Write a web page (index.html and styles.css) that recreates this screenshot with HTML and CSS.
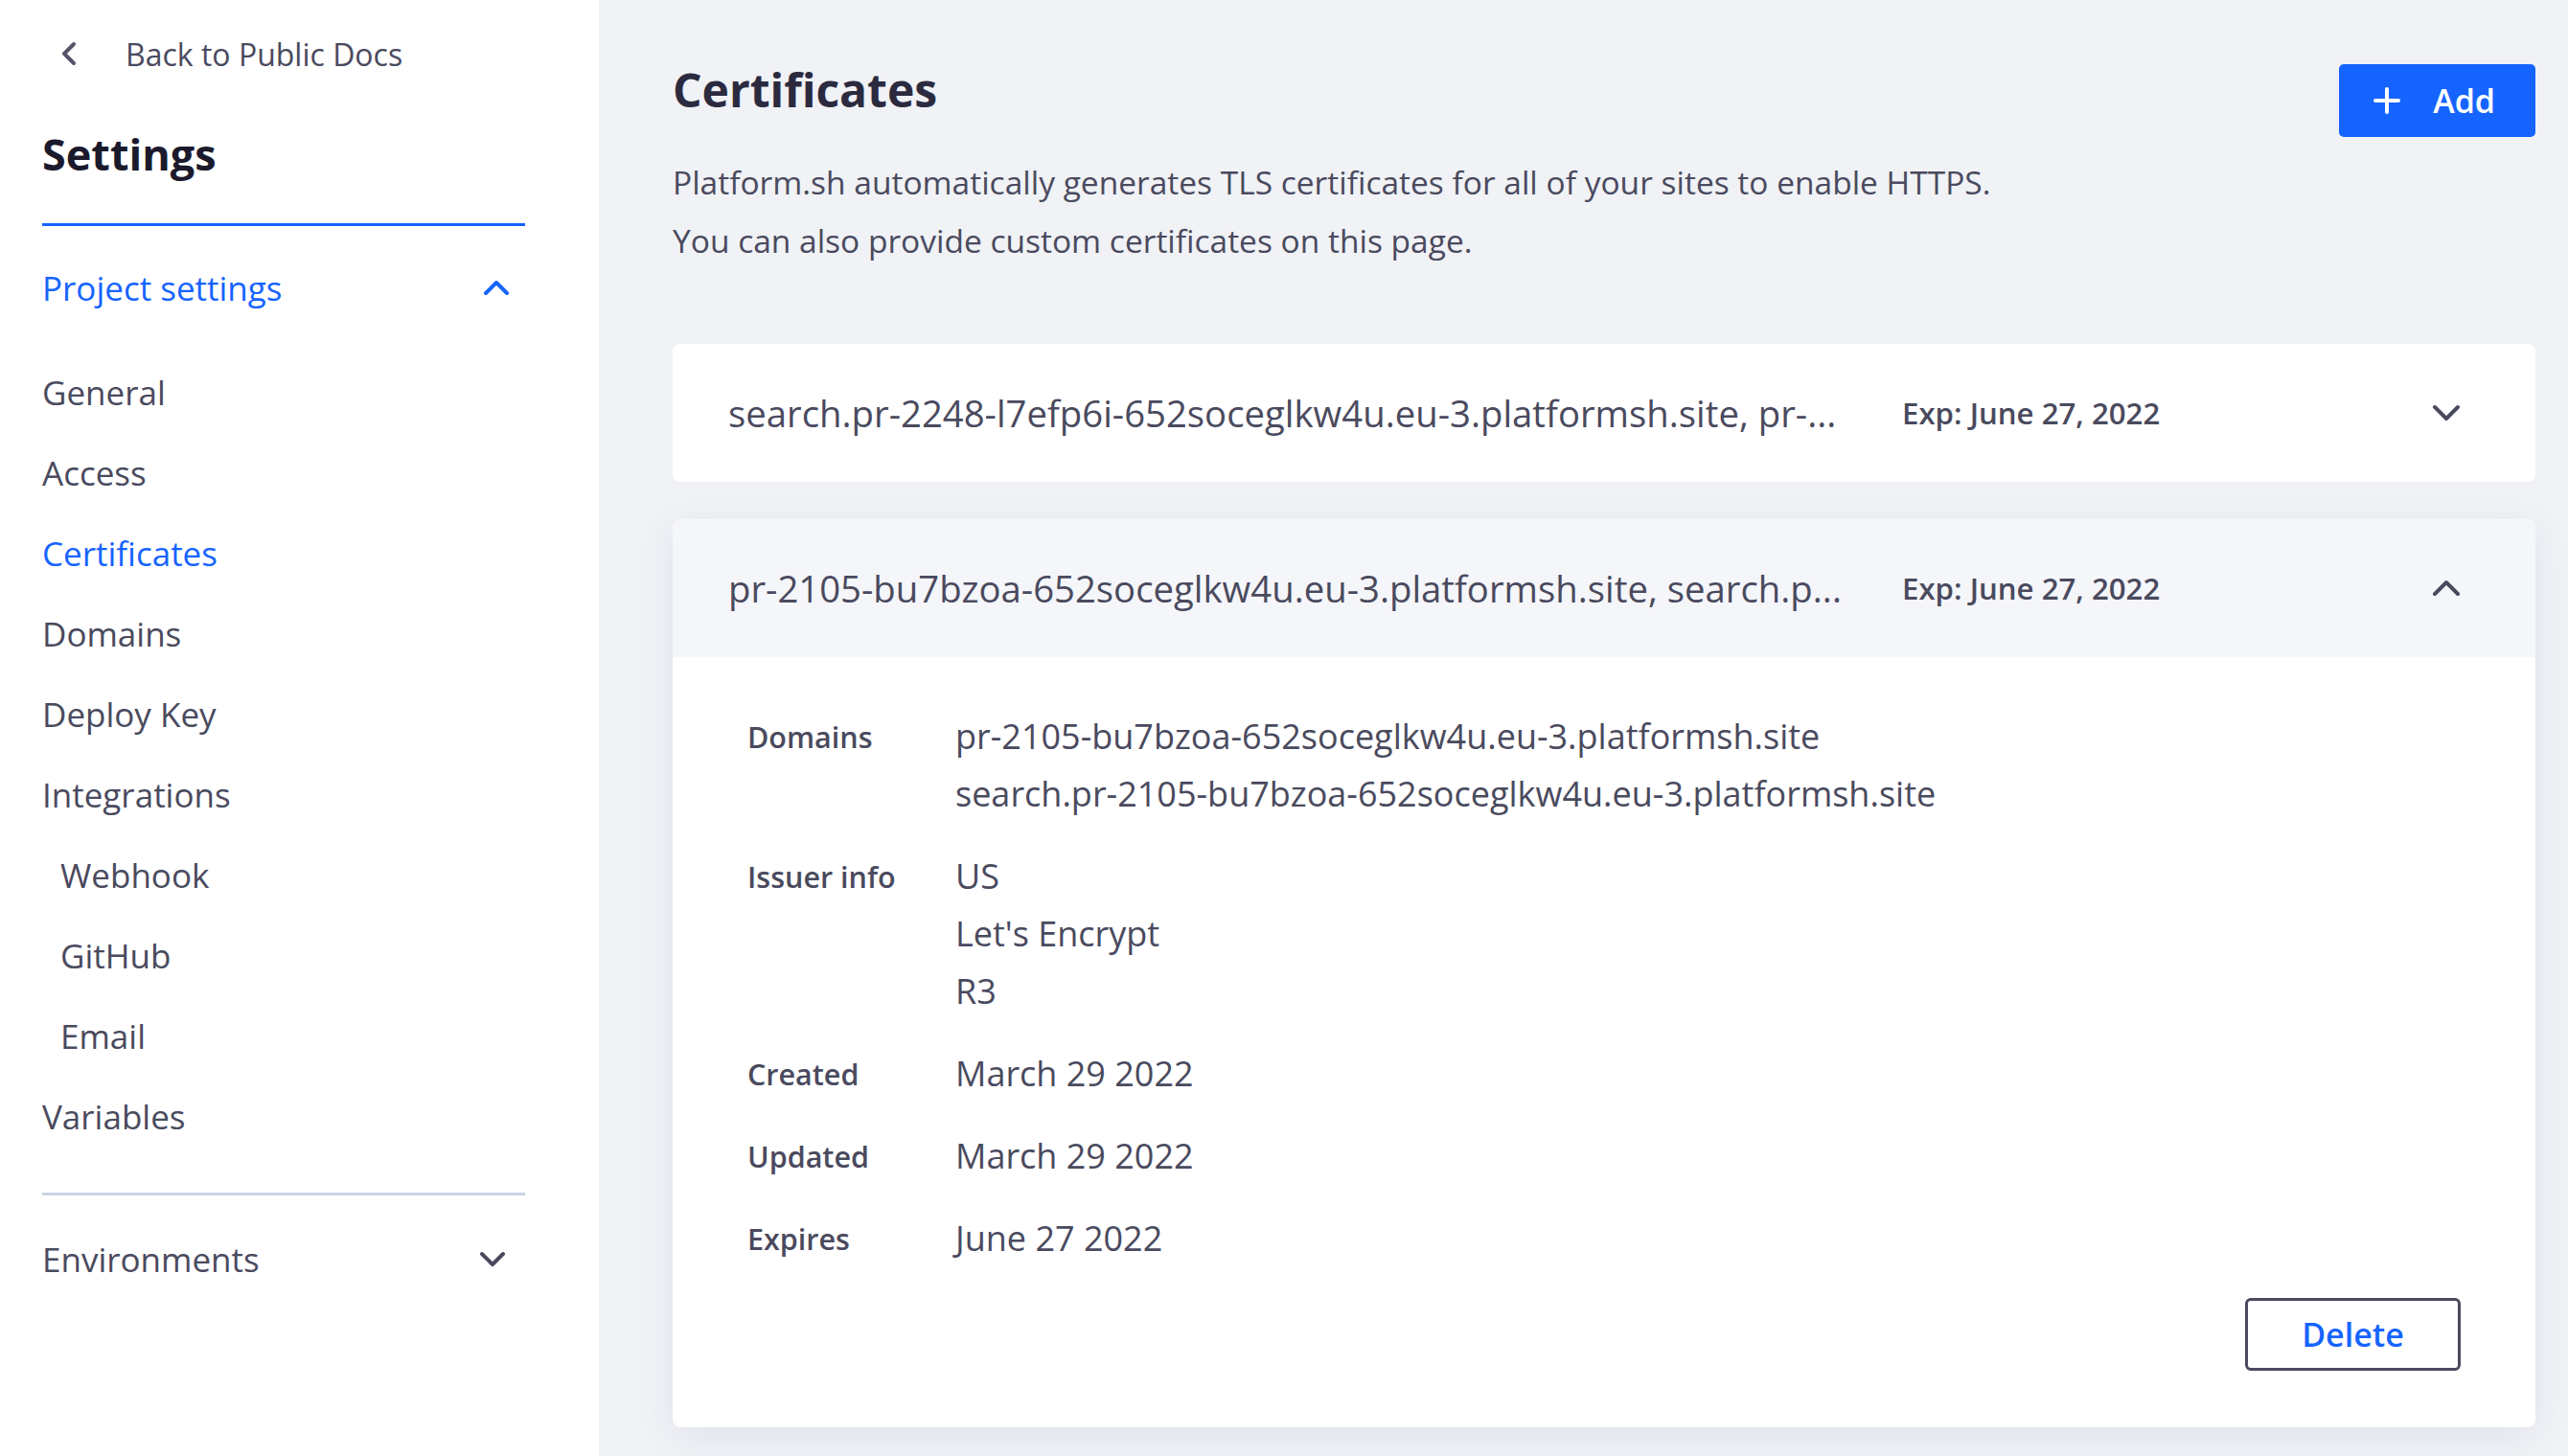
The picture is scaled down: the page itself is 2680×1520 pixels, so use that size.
FILE: index.html
```html
<!DOCTYPE html>
<html lang="en">
<head>
<meta charset="utf-8">
<title>Certificates - Settings</title>
<link rel="stylesheet" href="styles.css">
</head>
<body>
<div class="layout">
  <aside class="sidebar">
    <a class="back" href="#">
      <svg class="back-icon" viewBox="0 0 16 26" width="16" height="26"><polyline points="13,3 3,13 13,23" fill="none" stroke="currentColor" stroke-width="4" stroke-linecap="round" stroke-linejoin="round"/></svg>
      <span>Back to Public Docs</span>
    </a>
    <div class="side-head">
      <h2 class="side-title">Settings</h2>
    </div>
    <div class="group-head active">
      <span>Project settings</span>
      <svg class="chev" viewBox="0 0 28 17" width="28" height="17"><polyline points="3,14 14,3 25,14" fill="none" stroke="currentColor" stroke-width="4" stroke-linecap="round" stroke-linejoin="round"/></svg>
    </div>
    <nav class="nav">
      <a class="nav-item" href="#">General</a>
      <a class="nav-item" href="#">Access</a>
      <a class="nav-item current" href="#">Certificates</a>
      <a class="nav-item" href="#">Domains</a>
      <a class="nav-item" href="#">Deploy Key</a>
      <a class="nav-item" href="#">Integrations</a>
      <a class="nav-item sub" href="#">Webhook</a>
      <a class="nav-item sub" href="#">GitHub</a>
      <a class="nav-item sub" href="#">Email</a>
      <a class="nav-item" href="#">Variables</a>
    </nav>
    <div class="divider"></div>
    <div class="group-head">
      <span>Environments</span>
      <svg class="chev" viewBox="0 0 28 17" width="28" height="17"><polyline points="3,3 14,14 25,3" fill="none" stroke="currentColor" stroke-width="4" stroke-linecap="round" stroke-linejoin="round"/></svg>
    </div>
  </aside>

  <main class="main">
    <div class="page-head">
      <h1 class="page-title">Certificates</h1>
      <button class="btn-add" type="button">
        <svg viewBox="0 0 30 30" width="30" height="30"><path d="M15 3v24M3 15h24" fill="none" stroke="#fff" stroke-width="4" stroke-linecap="round"/></svg>
        <span>Add</span>
      </button>
    </div>
    <div class="intro">
      <p>Platform.sh automatically generates TLS certificates for all of your sites to enable HTTPS.</p>
      <p>You can also provide custom certificates on this page.</p>
    </div>

    <section class="cert">
      <div class="cert-head">
        <div class="cert-name">search.pr-2248-l7efp6i-652soceglkw4u.eu-3.platformsh.site, pr-...</div>
        <div class="cert-exp">Exp: June 27, 2022</div>
        <svg class="cert-chev" viewBox="0 0 30 18" width="30" height="18"><polyline points="3,3 15,15 27,3" fill="none" stroke="currentColor" stroke-width="4" stroke-linecap="round" stroke-linejoin="round"/></svg>
      </div>
    </section>

    <section class="cert open">
      <div class="cert-head">
        <div class="cert-name">pr-2105-bu7bzoa-652soceglkw4u.eu-3.platformsh.site, search.p...</div>
        <div class="cert-exp">Exp: June 27, 2022</div>
        <svg class="cert-chev" viewBox="0 0 30 18" width="30" height="18"><polyline points="3,15 15,3 27,15" fill="none" stroke="currentColor" stroke-width="4" stroke-linecap="round" stroke-linejoin="round"/></svg>
      </div>
      <div class="cert-body">
        <dl class="details">
          <div class="row">
            <dt>Domains</dt>
            <dd><div>pr-2105-bu7bzoa-652soceglkw4u.eu-3.platformsh.site</div><div>search.pr-2105-bu7bzoa-652soceglkw4u.eu-3.platformsh.site</div></dd>
          </div>
          <div class="row">
            <dt>Issuer info</dt>
            <dd><div>US</div><div>Let's Encrypt</div><div>R3</div></dd>
          </div>
          <div class="row">
            <dt>Created</dt>
            <dd><div>March 29 2022</div></dd>
          </div>
          <div class="row">
            <dt>Updated</dt>
            <dd><div>March 29 2022</div></dd>
          </div>
          <div class="row">
            <dt>Expires</dt>
            <dd><div>June 27 2022</div></dd>
          </div>
        </dl>
        <div class="actions">
          <button class="btn-delete" type="button">Delete</button>
        </div>
      </div>
    </section>
  </main>
</div>
</body>
</html>
```
FILE: styles.css
```css
* { box-sizing: border-box; }

html, body {
  margin: 0;
  padding: 0;
  height: 100%;
}

body {
  font-family: "Open Sans", "Noto Sans", "Liberation Sans", sans-serif;
  color: #4a4a5e;
  background: #f0f2f6;
  overflow: hidden;
}

.layout {
  display: flex;
  min-height: 1520px;
}

/* Sidebar */
.sidebar {
  flex: 0 0 625px;
  background: #ffffff;
  padding: 26px 77px 0 44px;
}

.back {
  display: flex;
  align-items: center;
  height: 60px;
  text-decoration: none;
  color: #4a4a5e;
  font-size: 32px;
  font-weight: 500;
}

.back-icon {
  margin-left: 20px;
  margin-right: 51px;
  color: #55546a;
}

.side-head {
  margin-top: 45px;
  padding-bottom: 42px;
  border-bottom: 3px solid #1664ff;
}

.side-title {
  margin: 0;
  font-size: 45px;
  line-height: 60px;
  font-weight: 700;
  color: #1b1a2c;
}

.group-head {
  display: flex;
  align-items: center;
  justify-content: space-between;
  height: 84px;
  padding-right: 16px;
  font-size: 35px;
  color: #4a4a5e;
}

.group-head.active {
  margin-top: 22px;
  color: #1664ff;
}

.nav {
  display: flex;
  flex-direction: column;
  margin-top: 25px;
}

.nav-item {
  display: flex;
  align-items: center;
  height: 84px;
  font-size: 35px;
  color: #4a4a5e;
  text-decoration: none;
}

.nav-item.sub {
  padding-left: 19px;
}

.nav-item.current {
  color: #1664ff;
}

.divider {
  margin-top: 38px;
  height: 3px;
  background: #cbd3e4;
}

.divider + .group-head {
  margin-top: 24px;
  padding-right: 20px;
}

/* Main */
.main {
  flex: 1;
  padding: 63px 34px 0 77px;
}

.page-head {
  display: flex;
  justify-content: space-between;
  align-items: flex-start;
}

.page-title {
  margin: 0;
  font-size: 48px;
  line-height: 62px;
  font-weight: 700;
  color: #2b2a3f;
}

.btn-add {
  margin-top: 4px;
  display: flex;
  align-items: center;
  gap: 33px;
  height: 76px;
  padding: 0 42px 0 35px;
  border: none;
  border-radius: 5px;
  background: #1664ff;
  color: #ffffff;
  font-family: inherit;
  font-size: 34px;
  font-weight: 600;
}

.intro {
  margin-top: 17px;
}

.intro p {
  margin: 0;
  font-size: 33.5px;
  line-height: 61px;
  color: #4a4a5e;
}

.cert {
  margin-top: 77px;
  background: #ffffff;
  border-radius: 8px;
  overflow: hidden;
}

.cert + .cert {
  margin-top: 39px;
}

.cert.open {
  box-shadow: 0 10px 40px rgba(40, 50, 90, 0.08);
}

.cert-head {
  display: flex;
  align-items: center;
  height: 144px;
  padding: 0 78px 0 58px;
}

.cert.open .cert-head {
  background: #f5f6fa;
}

.cert-name {
  flex: 0 0 1225px;
  white-space: nowrap;
  overflow: hidden;
  font-size: 38.3px;
  color: #4a4a5e;
}

.cert-exp {
  font-size: 31.2px;
  font-weight: 600;
  color: #4a4a5e;
}

.cert-chev {
  margin-left: auto;
  color: #4a4a5e;
}

.cert-body {
  padding: 53px 78px 59px 78px;
}

.details {
  margin: 0;
  display: flex;
  flex-direction: column;
  gap: 26px;
}

.row {
  display: flex;
}

.row dt {
  flex: 0 0 217px;
  font-size: 30.5px;
  font-weight: 600;
  line-height: 60px;
  color: #4a4a5e;
}

.row dd {
  margin: 0;
  font-size: 36px;
  line-height: 60px;
  color: #4a4a5e;
}

.actions {
  display: flex;
  justify-content: flex-end;
  margin-top: 32px;
}

.btn-delete {
  width: 225px;
  height: 76px;
  background: #ffffff;
  border: 3px solid #4a4a5e;
  border-radius: 6px;
  color: #1664ff;
  font-family: inherit;
  font-size: 34px;
  font-weight: 600;
}
```
